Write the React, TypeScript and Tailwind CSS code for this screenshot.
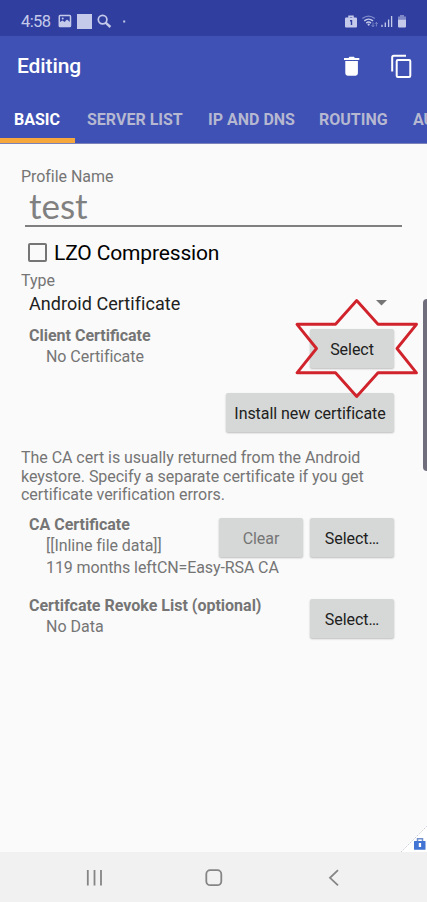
import React from "react";

function StatusBar() {
  return (
    <div className="flex h-9 items-start bg-[#303f9f] pl-[21px] text-[#c5caea]">
      <span className="mt-[11px] w-[37px] text-[16.5px] leading-[22px] tracking-[-0.6px]">4:58</span>
      <svg className="mt-[14px] h-[15px] w-[74px]" viewBox="58 14 74 15" fill="none">
        <rect x="59.3" y="15.6" width="11.2" height="11" rx="0.8" stroke="#c5caea" strokeWidth="1.5" />
        <path d="M60 25v-3l2.5-1.5 2 1.5 2.5-2.5 3 2.5v4H60z" fill="#c5caea" />
        <circle cx="62.7" cy="18.6" r="1" fill="#c5caea" />
        <rect x="77" y="14" width="15" height="15" fill="#c5caea" />
        <circle cx="102.6" cy="19.6" r="4.3" stroke="#c5caea" strokeWidth="1.7" />
        <path d="M105.6 22.6l4.8 4.4" stroke="#c5caea" strokeWidth="2.4" />
        <rect x="123.2" y="20.5" width="2" height="2" fill="#c5caea" />
      </svg>
      <svg className="mt-[14px] ml-auto h-[15px] w-[85px]" viewBox="342 14 85 15" fill="none">
        <path d="M349 18v-1.7h4V18" stroke="#c5caea" strokeWidth="1.5" />
        <rect x="345" y="17.6" width="12" height="9.8" rx="1" fill="#c5caea" />
        <path d="M350 20h2.2v5h-1.4v-3.4H350z" fill="#303f9f" />
        <path d="M362.4 18.6q6-5 12.4 0" stroke="#7f8aca" strokeWidth="1.3" />
        <path d="M364.3 20.9q4.3-3.6 8.7 0M366.3 23.1q2.3-2 4.7 0" stroke="#c5caea" strokeWidth="1.4" />
        <circle cx="368.7" cy="24.6" r="1.1" fill="#c5caea" />
        <path d="M373 22.5v4.2m-1.5-1.5 1.5 1.5 1.3-1.5M376.4 26.5v-4m-1.4 1.3 1.4-1.4 1.4 1.4" stroke="#8994d1" strokeWidth="0.8" />
        <path d="M382 24.7V27M385.3 22.5V27M388.6 19.5V27M391.6 16V27" stroke="#c5caea" strokeWidth="1.3" />
        <path d="M398 19.6v-3h2v-1.5h4v1.5h2v3z" fill="#7f89c7" />
        <path d="M398 19.6h8v7q0 1-1 1h-6q-1 0-1-1z" fill="#c5caea" />
      </svg>
    </div>
  );
}

function Header() {
  return (
    <header className="h-[108px] overflow-hidden border-b border-[#7983ba] bg-[#3f51b5]">
      <div className="flex h-[60px] items-center pl-[17px]">
        <h1 className="text-[21px] leading-6 font-medium tracking-[-0.1px] text-white">Editing</h1>
        <svg className="ml-auto h-[24px] w-[76px]" viewBox="340 52 76 24" fill="none">
          <path d="M344 56h4.5l1-1.2h4.4l1 1.2h4.4v2H344zM345.3 59h12.6v12.3q0 2.4-2.4 2.4h-7.8q-2.4 0-2.4-2.4z" fill="#fff" />
          <path d="M392.2 69.5V55.2q0-1.5 1.5-1.5H406" stroke="#fff" strokeWidth="2" />
          <rect x="396.7" y="58" width="13.6" height="17" rx="1.2" stroke="#fff" strokeWidth="2" />
        </svg>
        <div className="w-[11px]" />
      </div>
      <nav className="flex h-[47px] text-[16px] font-bold whitespace-nowrap text-[#b5b8d0]">
        <div className="flex w-[75px] shrink-0 flex-col border-b-[5px] border-[#f6a83c] pl-[14px] text-white">
          <span className="mt-[13px] leading-[22px]">BASIC</span>
        </div>
        <span className="mt-[13px] ml-3 w-[121px] shrink-0 leading-[22px]">SERVER LIST</span>
        <span className="mt-[13px] w-[111px] shrink-0 leading-[22px]">IP AND DNS</span>
        <span className="mt-[13px] w-[94px] shrink-0 leading-[22px]">ROUTING</span>
        <span className="mt-[13px] shrink-0 leading-[22px]">AU</span>
      </nav>
    </header>
  );
}

function Button({ children, className = "" }: { children: React.ReactNode; className?: string }) {
  return (
    <button
      className={`h-[39px] shrink-0 rounded-[2px] bg-[#d6d8d7] pt-[2px] text-[16px] tracking-[-0.05px] text-[#202020] shadow-[0_1px_2px_rgba(0,0,0,0.25)] ${className}`}
    >
      {children}
    </button>
  );
}

export default function App() {
  return (
    <div className="relative flex h-[902px] w-[427px] flex-col overflow-hidden bg-[#fafafa] font-[Roboto,sans-serif] text-[16px] text-[#757575]">
      <StatusBar />
      <Header />
      <main className="relative flex-1 pl-[21px]">
        <div className="h-[22px] pt-[22px] leading-[22px] tracking-[-0.05px]">Profile Name</div>
        <div className="mt-[22px] ml-1 h-[39px] w-[377px] border-b-2 border-[#7f7f7f] pl-1 font-[Lato,sans-serif] text-[35px] leading-[34px] text-[#808080]">
          test
        </div>
        <div className="flex h-[50px] items-center pl-[7px]">
          <span className="h-[19px] w-[19px] rounded-[2px] border-2 border-[#757575]" />
          <span className="ml-[7px] pt-[3px] text-[21px] tracking-[-0.15px] text-black">LZO Compression</span>
        </div>
        <div className="-mt-[7px] h-[22px] leading-[22px]">Type</div>
        <div className="flex h-[22px] items-center pl-2 text-[18px] leading-[22px] tracking-[0.05px] text-[#212121]">
          <span className="pt-px">Android Certificate</span>
          <svg className="mr-[40px] ml-auto h-[6px] w-[11px]" viewBox="0 0 11 6">
            <path d="M0 0h11L5.5 5.5z" fill="#757575" />
          </svg>
        </div>
        <section className="mt-[15px] flex h-[64px] pr-[33px] pl-2">
          <div className="-mt-1 flex-1">
            <h2 className="leading-[21px] font-bold">Client Certificate</h2>
            <p className="pl-[17px] leading-[21px] tracking-[-0.05px]">No Certificate</p>
          </div>
          <Button className="w-[84px]">Select</Button>
        </section>
        <div className="flex h-[54px] justify-end pr-[33px]">
          <Button className="w-[168px]">Install new certificate</Button>
        </div>
        <p className="h-[71px] pt-[2px] leading-[18.6px] tracking-[-0.04px] whitespace-nowrap">
          The CA cert is usually returned from the Android
          <br />
          keystore. Specify a separate certificate if you get
          <br />
          certificate verification errors.
        </p>
        <section className="flex h-[81px] gap-[7px] pr-[33px] pl-2">
          <div className="-mt-1 w-0 flex-1 whitespace-nowrap">
            <h2 className="leading-[21px] font-bold">CA Certificate</h2>
            <p className="pl-[17px] leading-[22px] tracking-[-0.05px]">[[Inline file data]]</p>
            <p className="pl-[17px] leading-[21px] tracking-[-0.1px]">119 months leftCN=Easy-RSA CA</p>
          </div>
          <Button className="w-[84px] !text-[#757575]">Clear</Button>
          <Button className="w-[84px]">Select…</Button>
        </section>
        <section className="flex pr-[33px] pl-2">
          <div className="-mt-1 flex-1">
            <h2 className="leading-[21px] font-bold">Certifcate Revoke List (optional)</h2>
            <p className="pl-[17px] leading-[21px]">No Data</p>
          </div>
          <Button className="w-[84px]">Select…</Button>
        </section>
      </main>
      <footer className="h-[50px] bg-[#f1f1f1]">
        <svg className="h-[50px] w-[427px]" viewBox="0 852 427 50" fill="none" stroke="#858585" strokeWidth="1.8">
          <path d="M87.8 870v15.5M94.5 870v15.5M101 870v15.5" />
          <rect x="206.3" y="870.2" width="15" height="15" rx="4" />
          <path d="M338 870.2l-8 7.6 8 7.6" />
        </svg>
      </footer>
      <svg className="absolute top-[290px] left-[285px] h-[115px] w-[142px]" viewBox="285 290 142 115" fill="none">
        <path
          d="M356.7 300.5L378 324.3H416.5L397 348.5L416.5 372.8H378L356.7 396.5L335.5 372.8H297L316.5 348.5L297 324.3H335.5Z"
          stroke="#d1232c"
          strokeWidth="2.9"
          strokeLinejoin="round"
        />
      </svg>
      <div className="absolute top-[299px] right-0 h-[172px] w-[4px] rounded-l-[4px] bg-[#706e7c]" />
      <svg className="absolute right-0 bottom-[50px] h-[27px] w-[27px]" viewBox="400 825 27 27" fill="none">
        <path d="M427 825v27h-27z" fill="#fff" />
        <path d="M401 852l26-26" stroke="#c9ccd4" strokeDasharray="1.5 1" />
        <path d="M417.5 841v-2.3h5v2.3" stroke="#7090cb" strokeWidth="1.5" />
        <rect x="414" y="841" width="11.5" height="8.8" rx="0.5" fill="#4274d4" />
        <path d="M418.8 843h2.3v4h-2.3z" fill="#fff" />
      </svg>
    </div>
  );
}
